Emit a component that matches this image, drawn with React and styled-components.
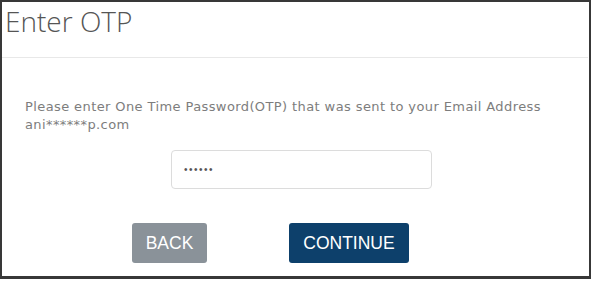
import React from 'react';
import styled, { createGlobalStyle } from 'styled-components';

const GlobalStyle = createGlobalStyle`
  html, body {
    margin: 0;
    padding: 0;
    background: #ffffff;
  }
`;

export default function App() {
  return (
    <>
      <GlobalStyle />
      <Frame>
        <Header>
          <Title>Enter OTP</Title>
        </Header>
        <Body>
          <Message>
            Please enter One Time Password(OTP) that was sent to your Email Address
            <br />
            ani******p.com
          </Message>
          <InputRow>
            <OtpInput type="password" value="123456" readOnly />
          </InputRow>
          <ButtonRow>
            <Button type="button" $variant="back">BACK</Button>
            <Button type="submit" $variant="primary">CONTINUE</Button>
          </ButtonRow>
        </Body>
      </Frame>
    </>
  );
}

const Frame = styled.div`
  box-sizing: border-box;
  width: 591px;
  height: 279px;
  border: 2px solid #383838;
  border-bottom-width: 3px;
  background: #fff;
  display: flex;
  flex-direction: column;
`;

const Header = styled.div`
  box-sizing: border-box;
  height: 56px;
  padding: 2px 0 0 3px;
  border-bottom: 1px solid #e8e8e8;
  margin-right: 1px;
`;

const Title = styled.h1`
  margin: 0;
  font-family: 'Open Sans', 'DejaVu Sans', sans-serif;
  font-weight: 300;
  font-size: 28px;
  line-height: 34px;
  color: #555555;
`;

const Body = styled.div`
  padding: 40px 0 0 23px;
  display: flex;
  flex-direction: column;
`;

const Message = styled.p`
  margin: 0;
  font-family: 'DejaVu Sans', sans-serif;
  font-size: 13px;
  letter-spacing: 0.4px;
  line-height: 18px;
  color: #7d7d7d;
`;

const InputRow = styled.div`
  display: flex;
  margin-top: 16px;
  padding-left: 146px;
`;

const OtpInput = styled.input`
  box-sizing: border-box;
  width: 261px;
  height: 39px;
  border: 1px solid #dcdcdc;
  border-radius: 4px;
  padding: 0 12px;
  font-family: 'Liberation Sans', sans-serif;
  font-size: 10px;
  letter-spacing: 1.5px;
  color: #555;
  outline: none;
`;

const ButtonRow = styled.div`
  display: flex;
  gap: 82px;
  margin-top: 34px;
  padding-left: 107px;
`;

const Button = styled.button`
  box-sizing: border-box;
  height: 40px;
  width: ${(p) => (p.$variant === 'primary' ? '120px' : '75px')};
  border: none;
  border-radius: 3px;
  background: ${(p) => (p.$variant === 'primary' ? '#0d406b' : '#8a9299')};
  color: #ffffff;
  font-family: 'Liberation Sans', sans-serif;
  font-size: 17.5px;
  padding: 0;
  cursor: pointer;
`;
